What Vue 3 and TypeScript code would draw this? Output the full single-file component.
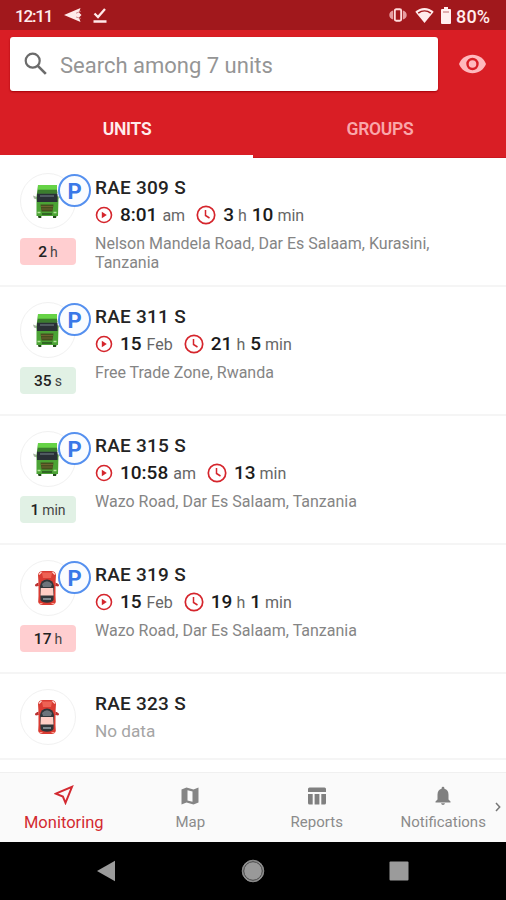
<script setup lang="ts">
interface Part { value: string; unit: string }
interface Unit {
  name: string
  vehicle: 'truck' | 'car'
  start?: Part
  duration?: Part[]
  address?: string
  age?: Part
  stale?: boolean
}

const units: Unit[] = [
  { name: 'RAE 309 S', vehicle: 'truck', start: { value: '8:01', unit: 'am' }, duration: [{ value: '3', unit: 'h' }, { value: '10', unit: 'min' }], address: 'Nelson Mandela Road, Dar Es Salaam, Kurasini, Tanzania', age: { value: '2', unit: 'h' }, stale: true },
  { name: 'RAE 311 S', vehicle: 'truck', start: { value: '15', unit: 'Feb' }, duration: [{ value: '21', unit: 'h' }, { value: '5', unit: 'min' }], address: 'Free Trade Zone, Rwanda', age: { value: '35', unit: 's' } },
  { name: 'RAE 315 S', vehicle: 'truck', start: { value: '10:58', unit: 'am' }, duration: [{ value: '13', unit: 'min' }], address: 'Wazo Road, Dar Es Salaam, Tanzania', age: { value: '1', unit: 'min' } },
  { name: 'RAE 319 S', vehicle: 'car', start: { value: '15', unit: 'Feb' }, duration: [{ value: '19', unit: 'h' }, { value: '1', unit: 'min' }], address: 'Wazo Road, Dar Es Salaam, Tanzania', age: { value: '17', unit: 'h' }, stale: true },
  { name: 'RAE 323 S', vehicle: 'car' },
]
</script>

<template>
  <div class="screen">
    <div class="status">
      <span class="clock">12:11</span>
      <svg class="st-plane" width="18" height="14" viewBox="0 0 18 14"><path d="M0 7 16.500 0 15 4.500l2.500 2.500L15 9.500l1.500 4.500Z" fill="#ffe9e9" /><path d="M12 5.200l5-2M12 9l5 1.500" stroke="#c8797c" stroke-width=".8" /></svg>
      <svg class="st-check" width="14" height="17" viewBox="0 0 14 17"><path d="m1.500 6.500 3.500 3.500L12 2M.5 14.500h13" fill="none" stroke="#ffe9e9" stroke-width="2.300" /></svg>
      <span class="grow"></span>
      <svg class="st-vib" width="18" height="14" viewBox="0 0 18 14"><path d="M4 2.500C1.500 3 .3 5 .3 7s1.200 4 3.700 4.500ZM14 2.500c2.500.5 3.700 2.500 3.700 4.500s-1.200 4-3.700 4.500Z" fill="#e79da0" /><rect x="5.800" y="1.200" width="6.400" height="11.600" rx="1.500" fill="#a3181c" stroke="#ffdcdc" stroke-width="1.900" /></svg>
      <svg class="st-wifi" width="19" height="17" viewBox="0 0 19 17"><path d="M.3 4.700C5.500-.4 13.500-.4 18.700 4.700L9.500 16Z" fill="#ffecec" /><path d="M3.200 6.200c3.800-3 8.800-3 12.600 0" fill="none" stroke="#a3181c" stroke-width="1.500" /></svg>
      <svg class="st-bat" width="10" height="17" viewBox="0 0 10 17"><path d="M3 0h4v2h2q1 0 1 1v13q0 1-1 1H1q-1 0-1-1V3q0-1 1-1h2Z" fill="#fff0f0" /><path d="M2 5h6" stroke="#c26a6d" stroke-width="1" /></svg>
      <span class="percent">80%</span>
    </div>

    <header>
      <div class="bar">
        <div class="search">
          <svg width="24" height="24" viewBox="0 0 24 24"><circle cx="8.700" cy="8.700" r="7" fill="none" stroke="#6b6b6b" stroke-width="2.200" /><path d="m13.800 13.800 8 8" stroke="#6b6b6b" stroke-width="2.600" /></svg>
          <span>Search among 7 units</span>
        </div>
        <div class="eye">
          <svg width="27" height="20" viewBox="0 0 27 20"><path d="M0 10C2.200 4.300 7.400.8 13.500.8S24.800 4.300 27 10c-2.200 5.700-7.400 9.200-13.500 9.200S2.200 15.700 0 10Z" fill="#ffb9bd" /><circle cx="13.500" cy="10" r="5" fill="#ffb9bd" stroke="#d91e25" stroke-width="2.400" /></svg>
        </div>
      </div>
      <div class="tabs">
        <div class="tab active">UNITS</div>
        <div class="tab">GROUPS</div>
      </div>
    </header>

    <main>
      <article v-for="u in units" :key="u.name" class="unit" :class="{ empty: !u.age }">
        <div class="side">
          <div class="avatar">
            <svg v-if="u.vehicle === 'truck'" width="28" height="36" viewBox="0 0 28 36">
              <path d="M4.500 31h3.800v4H5.500ZM20 31h4l-1 4h-3Z" fill="#234b1b" />
              <path d="M0 12.500 4 14v2.500l-3-1ZM27 12.500 24 14v2l3-1Z" fill="#a9b5a4" />
              <path d="M5 2h19v10l1.500 3-.5 18H3.500V14Z" fill="#4ba335" />
              <path d="M5 2h19v4.500H5Z" fill="#66d346" />
              <path d="M5 7h19l.5 3H4.500Z" fill="#3b7e2d" />
              <path d="M4 10.500h20.500v8.500H4Z" fill="#293035" />
              <path d="M7 13h14" stroke="#4f5a60" stroke-width="2" />
              <path d="M7.500 21.500h13l-1 7h-11Z" fill="#46501f" />
              <path d="M8 23.500h12M8.500 26h11" stroke="#6f6330" stroke-width="1" />
              <path d="M4.500 29.500h3M20.500 29.500h3" stroke="#b5e39c" stroke-width="1.500" />
              <path d="M9 30h10v2H9Z" fill="#306624" />
            </svg>
            <svg v-else class="car" width="24" height="36" viewBox="0 0 24 36">
              <path d="m3.500 13-2.800 1.500V16l3-.5M20.500 13l2.800 1.500V16l-3-.5" fill="#b82c2c" stroke="#b82c2c" />
              <path d="M3 5Q3.500 1 8 1h8q4.500 0 5 4l-.5 8v13l.3 6q-.8 3-4.300 3h-9q-3.500 0-4.300-3L3.500 26V13Z" fill="#d93b32" />
              <path d="M7 2.500h10L16 8H8Z" fill="#ee6254" />
              <path d="M4 4.500 6.500 2M20 4.500 17.500 2" stroke="#ffd9d4" stroke-width="1.300" />
              <path d="M5 16Q6 9.500 12 9.500t7 6.500l-.5 14q-1.500 2.800-6.500 2.800T5.500 30Z" fill="#30363a" />
              <path d="M7 14Q12 8.500 17 14l-1 3H8Z" fill="#6b747b" />
              <path d="M5.800 18h12.400l.3 7.500h-13Z" fill="#ffcfc6" />
              <path d="M8 29h8" stroke="#7c878d" stroke-width="2" />
              <path d="M4.500 33.500h3M16.500 33.500h3" stroke="#ff9d8f" />
            </svg>
            <span v-if="u.age" class="parking">P</span>
          </div>
          <div v-if="u.age" class="age" :class="{ stale: u.stale }"><b>{{ u.age.value }}</b><i>{{ u.age.unit }}</i></div>
        </div>
        <div class="info">
          <div class="name">{{ u.name }}</div>
          <template v-if="u.start">
            <div class="times">
              <svg class="play" width="18" height="18" viewBox="0 0 18 18"><circle cx="9" cy="9" r="7.500" fill="none" stroke="#d5252c" stroke-width="1.600" /><path d="M6.800 5.800 11.800 9 6.800 12.200Z" fill="#d5252c" /></svg>
              <b>{{ u.start.value }}</b><i>{{ u.start.unit }}</i>
              <svg class="watch" width="20" height="20" viewBox="0 0 20 20"><circle cx="10" cy="10" r="8.700" fill="none" stroke="#d5252c" stroke-width="1.700" /><path d="M9.500 5v5.500l4 2.500" fill="none" stroke="#d5252c" stroke-width="1.500" /></svg>
              <template v-for="d in u.duration" :key="d.unit"><b>{{ d.value }}</b><i>{{ d.unit }}</i></template>
            </div>
            <div class="address">{{ u.address }}</div>
          </template>
          <div v-else class="nodata">No data</div>
        </div>
      </article>
    </main>

    <nav>
      <div class="item on">
        <svg width="20" height="20" viewBox="0 0 20 20"><path d="M1.800 8.700 18 1.800l-6.500 16-2.600-6.300Z" fill="none" stroke="#d32a31" stroke-width="2" /></svg>
        <span>Monitoring</span>
      </div>
      <div class="item">
        <svg width="20" height="20" viewBox="0 0 20 20"><path d="m1.500 3.500 5-2 7 2 5-2v15l-5 2-7-2-5 2Z" fill="#858585" /><path d="M7.500 4.200 12.500 5.600v10.200l-5-1.400Z" fill="#fafafa" /></svg>
        <span>Map</span>
      </div>
      <div class="item">
        <svg width="20" height="20" viewBox="0 0 20 20"><path d="M1 3q0-1.500 1.500-1.500h15Q19 1.500 19 3v3H1ZM1 8h4.700v10.500H2.500Q1 18.500 1 17ZM7.600 8h4.800v10.500H7.600ZM14.300 8H19v9q0 1.500-1.500 1.500h-3.200Z" fill="#808080" /></svg>
        <span>Reports</span>
      </div>
      <div class="item">
        <svg width="20" height="20" viewBox="0 0 20 20"><path d="M10 .8q1.400 0 1.400 1.400v.6q4.100 1.200 4.100 6v4.700l2 2v1h-15v-1l2-2V8.800q0-4.800 4.100-6v-.6Q8.600.8 10 .8ZM8 17.300h4q-.4 1.800-2 1.800t-2-1.800Z" fill="#808080" /></svg>
        <span>Notifications</span>
      </div>
      <svg class="more" width="6" height="10" viewBox="0 0 6 10"><path d="m1 1 3.700 4L1 9" fill="none" stroke="#777" stroke-width="1.500" /></svg>
    </nav>

    <footer>
      <svg width="20" height="22" viewBox="0 0 20 22"><path d="M19 .8v20.400L1 11Z" fill="#9b9b9b" /></svg>
      <svg width="24" height="24" viewBox="0 0 24 24"><circle cx="12" cy="12" r="10.800" fill="#999" stroke="#8b8b8b" /><circle cx="12" cy="12" r="9.300" fill="none" stroke="#444" /></svg>
      <svg width="20" height="20" viewBox="0 0 20 20"><rect x=".5" y=".5" width="19" height="19" rx="1" fill="#9b9b9b" /></svg>
    </footer>
  </div>
</template>

<style>
body { margin: 0; background: #fff; }
</style>

<style scoped>
.screen { width: 506px; height: 900px; display: flex; flex-direction: column; overflow: hidden; background: #fff; font-family: Roboto, "Liberation Sans", sans-serif; }
.screen svg { display: block; flex: none; }
b { font-weight: 500; }
i { font-style: normal; }
.grow { flex: 1; }
.status { height: 30px; flex: none; box-sizing: border-box; padding: 0 14px 0 15px; background: #a1181c; display: flex; align-items: center; color: #ffeded; font-size: 17.500px; font-weight: 500; }
.clock { width: 49px; font-size: 17px; font-weight: 500; letter-spacing: -1.200px; padding-top: 2px; }
.st-check { margin-left: 11px; }
.st-wifi { margin-left: 8px; }
.st-bat { margin-left: 7px; }
.percent { width: 36px; margin-left: 5px; padding-top: 2px; font-size: 18px; letter-spacing: .2px; }
header { height: 128px; flex: none; background: #d91e25; display: flex; flex-direction: column; }
.bar { height: 69px; display: flex; padding: 7px 0 0 10px; box-sizing: border-box; }
.search { width: 428px; height: 54px; box-sizing: border-box; padding-left: 14px; display: flex; align-items: center; gap: 12px; background: #fff; border-radius: 3px; box-shadow: 0 1px 2px #a30009; color: #959595; font-size: 22px; }
.search span { padding-top: 2px; white-space: nowrap; }
.eye { flex: 1; height: 54px; display: flex; align-items: center; justify-content: center; }
.tabs { flex: 1; display: flex; }
.tab { flex: 1; box-sizing: border-box; padding: 20px 0 0 1px; text-align: center; color: #f9a7aa; font-size: 17.500px; line-height: 21px; font-weight: 600; letter-spacing: -.25px; border-bottom: 1px solid #c91820; }
.tab.active { color: #ffecec; border-bottom: 3px solid #fff; }
main { height: 614px; flex: none; overflow: hidden; }
.unit { height: 129px; box-sizing: border-box; padding-left: 20px; display: flex; border-bottom: 2px solid #f5f5f5; }
.unit.empty { height: 86px; }
.side { width: 56px; padding-top: 15px; }
.avatar { position: relative; width: 56px; height: 56px; box-sizing: border-box; border: 1px solid #f1f1f1; border-radius: 50%; display: flex; align-items: center; justify-content: center; }
.avatar > svg { margin-right: 2px; }
.parking { position: absolute; left: 37px; top: 0; width: 33px; height: 33px; box-sizing: border-box; border: 2px solid #5590ef; border-radius: 50%; background: #fafcff; color: #3978e8; font-size: 22px; font-weight: 700; line-height: 31px; text-align: center; }
.age { height: 27px; margin-top: 9px; border-radius: 4px; background: #e1f1e5; display: flex; align-items: baseline; justify-content: center; gap: 3px; line-height: 28px; color: #222; }
.age.stale { background: #ffced0; }
.age b { font-size: 15.500px; }
.age i { font-size: 14px; color: #444; }
.info { width: 360px; padding: 18px 0 0 19px; }
.name { height: 24px; line-height: 24px; font-size: 19px; font-weight: 500; letter-spacing: .25px; color: #242424; white-space: nowrap; }
.times { height: 28px; margin-top: 1px; display: flex; align-items: baseline; line-height: 28px; white-space: nowrap; }
.times b { font-size: 19px; color: #1b1b1b; }
.times i { font-size: 16px; color: #666; margin: 0 6px 0 5px; }
.times .play { align-self: center; margin-right: 7px; }
.times .watch { align-self: center; margin: 0 7px 0 5px; }
.times .watch ~ i { margin: 0 5px 0 4px; }
.address { margin-top: 5px; font-size: 16px; line-height: 19px; color: #858585; }
.nodata { margin-top: 3px; font-size: 17.200px; line-height: 24px; color: #a5a5a5; }
nav { position: relative; height: 70px; flex: none; box-sizing: border-box; display: flex; background: #fafafa; border-top: 1px solid #f0f0f0; }
.item { flex: 1; padding: 13px 0 0 1px; display: flex; flex-direction: column; align-items: center; font-size: 15px; line-height: 20px; color: #8b8b8b; }
.item span { margin-top: 6px; }
.item.on { color: #d32a31; font-size: 16.500px; }
.item.on span { margin-top: 8px; }
.item.on svg { margin-top: -1px; }
.more { position: absolute; left: 495px; top: 29px; }
footer { height: 58px; flex: none; background: #000; display: flex; align-items: center; justify-content: space-between; padding: 0 97px 0 96px; }
</style>
